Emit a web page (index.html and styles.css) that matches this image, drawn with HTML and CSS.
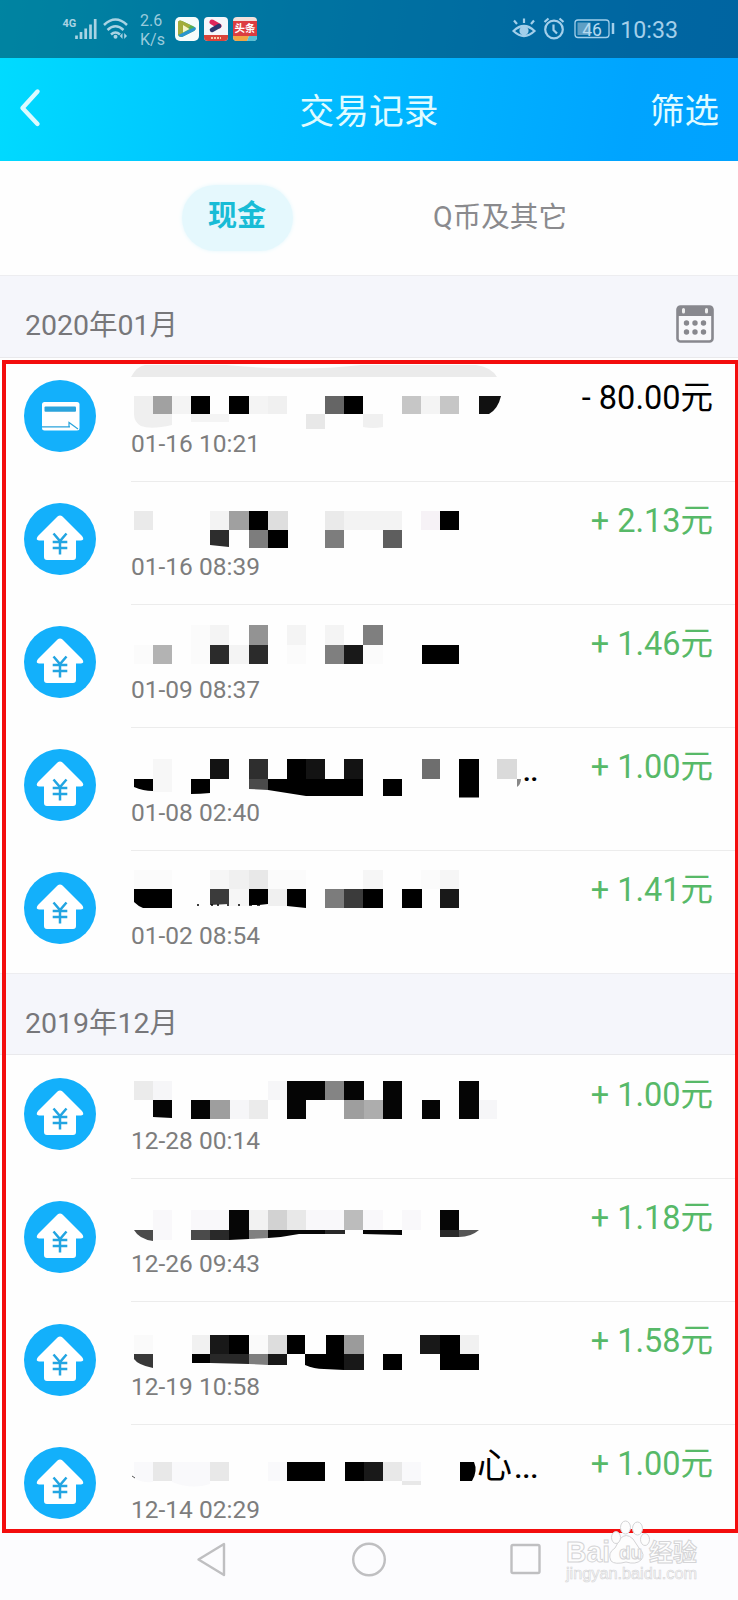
FILE: index.html
```
<!DOCTYPE html>
<html lang="zh-CN">
<head>
  <meta charset="UTF-8">
  <meta name="viewport" content="width=device-width, initial-scale=1.0">
  <title>交易记录</title>
  <link rel="stylesheet" href="styles.css">
</head>
<body>
  <!-- Общие иконки -->
  <svg class="defs" width="0" height="0">
    <symbol id="house" viewBox="0 0 72 72">
      <circle cx="36" cy="36" r="36" fill="#13b0fb"/>
      <path d="M33.5 13.6Q36 11.4 38.5 13.6L58 33Q61 37 57 37.5H52V54Q52 57 49 57H23Q20 57 20 54V37.5H15Q11 37 14 33Z" fill="#fff"/>
      <path d="M29.5 30.5L36 38L42.5 30.5M28.7 39H43.3M28.7 45H43.3M36 38V51.5" fill="none" stroke="#22a5e2" stroke-width="2.5"/>
    </symbol>
    <symbol id="card" viewBox="0 0 72 72">
      <circle cx="36" cy="36" r="36" fill="#13b0fb"/>
      <rect x="18" y="22" width="37.5" height="28.5" rx="2.5" fill="#fff"/>
      <rect x="20.5" y="26.5" width="31.5" height="5.2" rx="1" fill="#2ba4dc"/>
      <path d="M18 46.8H46M45 47V42.5L54 49" fill="none" stroke="#2ba4dc" stroke-width="1.2"/>
    </symbol>
  </svg>

  <div class="phone">
    <div class="top">
      <div class="status">
        <svg class="signal" width="66" height="26" viewBox="0 0 66 26" fill="none" stroke="#a9d3e3">
          <text x="0.5" y="10.5" class="net">4G</text>
          <path d="M14.500 23V19.5M19 23V16M23.700 23V12.5M28.500 23V8.5M33.200 23V3" stroke-width="2.7"/>
          <path d="M42 9Q53.500 -2 65 9M45.500 14Q53.500 6.5 61.500 14M49 18.5Q53.500 14.5 58 18.5" stroke-width="2.5"/>
          <circle cx="53.500" cy="20.7" r="2" fill="#a9d3e3" stroke="none"/>
          <path d="M60.5 17V23L57.8 20ZM62.2 17V23L65 20Z" fill="#a9d3e3" stroke="none"/>
        </svg>
        <div class="speed">2.6<br>K/s</div>
        <div class="apps">
          <svg width="24" height="24" viewBox="0 0 24 24">
            <rect width="24" height="24" rx="5" fill="#f6fcfb"/>
            <path d="M3 5Q4 2.5 7 4L19 9.5Q22 12 19 14L7 20Q3 20.500 3 17Z" fill="#53ad55"/>
            <path d="M3 5Q4 2.500 7 4L16 8.500L5 18L3 17Z" fill="#a2ad3c"/>
            <path d="M20 10Q22 12 19 14L7 20Q4 20 3.500 18Z" fill="#2995d1"/>
            <path d="M8 8L14.500 12L8 15.500Z" fill="#f4f5c9"/>
          </svg>
          <svg width="24" height="24" viewBox="0 0 24 24">
            <rect width="24" height="24" rx="4" fill="#f5f6fa"/>
            <path d="M0 18H24V20Q24 24 20 24H4Q0 24 0 20Z" fill="#db443b"/>
            <path d="M8 5L15 9" stroke="#e0255b" stroke-width="5" stroke-linecap="round"/>
            <path d="M15 9L8 13" stroke="#2c3770" stroke-width="4.500" stroke-linecap="round"/>
            <path d="M7 21H17" stroke="#f8c9a6" stroke-width="2" stroke-dasharray="2 1"/>
          </svg>
          <svg width="24" height="24" viewBox="0 0 24 24">
            <rect width="24" height="24" rx="4" fill="#f1e1dc"/>
            <rect y="4" width="24" height="15" fill="#dc3d40"/>
            <path d="M0 19H16L14 24H4Q0 24 0 20Z" fill="#f0a545"/>
            <path d="M16 19H24V20Q24 24 20 24H14Z" fill="#58bfd3"/>
            <text x="12" y="15" class="app-name">头条</text>
          </svg>
        </div>
        <div class="status-right">
          <svg width="106" height="24" viewBox="0 0 106 24" fill="none" stroke="#a3cfea" stroke-width="2.2">
            <path d="M1.500 14Q12 4 22.500 14Q12 24 1.500 14ZM12 6V1.500M5 7L2 3.500M19 7L22 3.500"/>
            <circle cx="12" cy="13.800" r="3.500" fill="#a3cfea"/>
            <circle cx="42" cy="12.500" r="8.800"/>
            <path d="M41.500 7.500V13L45 16.500M32.500 5L36.500 1.500M47.500 1.500L51.500 5"/>
            <rect x="63" y="3" width="34" height="17.500" rx="3" stroke-width="1.300"/>
            <rect x="65.500" y="5.500" width="13" height="12.500" fill="#5f9fc4" stroke="none"/>
            <path d="M101 6V17" stroke-width="2.500"/>
            <text x="80" y="18.500" class="battery">46</text>
          </svg>
          <span class="time">10:33</span>
        </div>
      </div>
      <div class="navbar">
        <svg width="22" height="40" viewBox="0 0 22 40"><path d="M18.500 3.500L3.500 20L18.500 36" fill="none" stroke="#dcfaff" stroke-width="4.400" stroke-linecap="round" stroke-linejoin="round"/></svg>
        <h1>交易记录</h1>
        <span>筛选</span>
      </div>
    </div>

    <div class="tabs">
      <div class="tab active"><span>现金</span></div>
      <div class="tab"><span>Q币及其它</span></div>
    </div>

    <div class="month">
      <span>2020年01月</span>
      <svg width="38" height="38" viewBox="0 0 38 38">
        <rect x="1.500" y="1.500" width="35" height="35" rx="3" fill="#f8f8fb" stroke="#88888e" stroke-width="2.600"/>
        <path d="M1 4Q1 1 4 1H34Q37 1 37 4V11H1Z" fill="#88888e"/>
        <path d="M7.500 4.500V7M30.500 4.500V7" stroke="#eee" stroke-width="3" stroke-linecap="round"/>
        <path d="M10.500 18H10.510M19 18H19.010M27.500 18H27.510M10.500 27H10.510M19 27H19.010M27.500 27H27.510" stroke="#88888e" stroke-width="5.400" stroke-linecap="round"/>
      </svg>
    </div>

    <div class="row">
      <svg class="icon"><use href="#card"/></svg>
      <div class="info">
        <svg class="mosaic" viewBox="0 0 420 72">
          <path d="M0 19Q6 8 14 7H95Q170 14 230 7H345Q360 9 366 19Z" fill="#ebebeb"/>
          <path d="M3 38H22V56H41V67Q20 72 10 68Q3 64 3 56Z" fill="#efefef"/>
          <path d="M22 38h19v18h-19z" fill="#a1a1a1"/>
          <path d="M41 38h19v18h-19zM118 38h19v18h-19zM60 56h38v8h-38zM290 38h19v18h-19z" fill="#f4f4f4"/>
          <path d="M60 38h19v18h-19zM98 38h20v18h-20zM213 38h19v18h-19z" fill="#000"/>
          <path d="M137 38h19v18h-19zM232 56h20v13q-10 2-20 0z" fill="#f0f0f0"/>
          <path d="M194 38h19v18h-19z" fill="#656565"/>
          <path d="M175 56h19v15h-19z" fill="#e8e8e8"/>
          <path d="M271 38h19v18h-19zM309 38h19v18h-19z" fill="#c6c6c6"/>
          <path d="M348 38h22q-3 13-12 18h-10z" fill="#111"/>
        </svg>
        <span class="date">01-16 10:21</span>
      </div>
      <span class="amount out">- 80.00元</span>
    </div>

    <div class="row">
      <svg class="icon"><use href="#house"/></svg>
      <div class="info">
        <svg class="mosaic" viewBox="0 0 420 72">
          <path d="M3 30h19v19h-19zM194 30h19v19h-19z" fill="#eaeaea"/>
          <path d="M79 30h19v19h-19zM213 30h39v19h-39zM252 30h19v19h-19z" fill="#f3f3f3"/>
          <path d="M290 30h19v19h-19z" fill="#f6f2f6"/>
          <path d="M98 30h20v19h-20z" fill="#a0a0a0"/>
          <path d="M118 30h19v19h-19zM137 49h20v18h-20zM309 30h19v19h-19z" fill="#000"/>
          <path d="M137 30h20v19h-20z" fill="#dedede"/>
          <path d="M79 49h19v17l-19-2z" fill="#2d2d2d"/>
          <path d="M118 49h19v18h-19zM194 49h19v18h-19z" fill="#7d7d7d"/>
          <path d="M252 49h19v18h-19z" fill="#5e5e5e"/>
        </svg>
        <span class="date">01-16 08:39</span>
      </div>
      <span class="amount">+ 2.13元</span>
    </div>

    <div class="row">
      <svg class="icon"><use href="#house"/></svg>
      <div class="info">
        <svg class="mosaic" viewBox="0 0 420 72">
          <path d="M79 21h19v20h-19zM156 21h19v20h-19zM194 21h19v20h-19zM98 41h20v19h-20z" fill="#f4f4f4"/>
          <path d="M3 41h19v19h-19zM60 21h19v39h-19zM156 41h19v19h-19zM232 41h20v19h-20z" fill="#fbfbfb"/>
          <path d="M118 21h19v20h-19z" fill="#939393"/>
          <path d="M232 21h20v20h-20zM194 41h19v19h-19z" fill="#7f7f7f"/>
          <path d="M22 41h19v19h-19z" fill="#b3b3b3"/>
          <path d="M79 41h19v19h-19zM118 41h19v19h-19z" fill="#2b2b2b"/>
          <path d="M213 41h19v19h-19z" fill="#191919"/>
          <path d="M291 41h37v19h-37z" fill="#000"/>
        </svg>
        <span class="date">01-09 08:37</span>
      </div>
      <span class="amount">+ 1.46元</span>
    </div>

    <div class="row">
      <svg class="icon"><use href="#house"/></svg>
      <div class="info">
        <svg class="mosaic" viewBox="0 0 420 72">
          <path d="M22 32h19v33h-19z" fill="#f7f7f7"/>
          <path d="M79 32h19v20h-19zM175 32h19v20h-19zM213 32h19v20h-19z" fill="#131313"/>
          <path d="M118 32h19v20h-19z" fill="#2e2e2e"/>
          <path d="M118 52h19v11l-19-1z" fill="#4a4a4a"/>
          <path d="M156 32h19v20h-19zM328 32h20v38.500h-20zM3 52h19v12q-10 0-19-4zM60 52h19v14q-10 1-19 1zM137 52h95v17h-57l-38-6zM252 52h19v17h-19z" fill="#000"/>
          <path d="M291 32h18v20h-18z" fill="#6e6e6e"/>
          <path d="M366 32h20v20h-20z" fill="#dadada"/>
          <path d="M386 52h4q0 5-4 8z" fill="#888"/>
          <text x="392" y="53.500" class="dots">..</text>
        </svg>
        <span class="date">01-08 02:40</span>
      </div>
      <span class="amount">+ 1.00元</span>
    </div>

    <div class="row last">
      <svg class="icon"><use href="#house"/></svg>
      <div class="info">
        <svg class="mosaic" viewBox="0 0 420 72">
          <path d="M79 20h19v19h-19zM232 20h20v19h-20zM309 20h19v19h-19zM98 39h20v17h-20z" fill="#f6f6f6"/>
          <path d="M3 20h38v19h-38zM137 20h38v19h-38zM290 20h19v19h-19z" fill="#fbfbfb"/>
          <path d="M98 20h20v19h-20zM137 39h19v17h-19z" fill="#f0f0f0"/>
          <path d="M118 20h19v19h-19z" fill="#e8e8e8"/>
          <path d="M3 39h38v19h-29q-5-2-9-6zM118 39h19v15l-9 1-10 0zM156 39h19v19l-19-2zM232 39h20v19h-20zM271 39h20v19h-20z" fill="#000"/>
          <path d="M79 39h19v15l-19 1zM213 39h19v19h-19z" fill="#3b3b3b"/>
          <path d="M194 39h19v19h-19z" fill="#7c7c7c"/>
          <path d="M309 39h19v19h-19z" fill="#191919"/>
          <path d="M66 55h2M80 55h2M86 55h2M96 55h2M107 55h2M118 55h3M126 55h3" stroke="#000" stroke-width="1.500"/>
        </svg>
        <span class="date">01-02 08:54</span>
      </div>
      <span class="amount">+ 1.41元</span>
    </div>

    <div class="month second"><span>2019年12月</span></div>

    <div class="row">
      <svg class="icon"><use href="#house"/></svg>
      <div class="info">
        <svg class="mosaic" viewBox="0 0 420 72">
          <path d="M3 26h19v19h-19zM118 45h19v19h-19z" fill="#ebebeb"/>
          <path d="M22 26h19v19h-19zM98 45h20v19h-20zM137 26h19v19h-19zM348 45h18v19h-18z" fill="#f6f6f8"/>
          <path d="M156 26h38v19h-19v19h-19zM213 26h20v19h-20zM252 26h19v38h-19zM328 26h20v38h-20zM22 45h19v18l-19-1zM60 45h19v19h-19zM291 45h18v19h-18z" fill="#050505"/>
          <path d="M194 26h19v19h-19z" fill="#848484"/>
          <path d="M79 45h20v19h-20zM213 45h20v19h-20z" fill="#9e9e9e"/>
          <path d="M233 45h19v19h-19z" fill="#adadad"/>
        </svg>
        <span class="date">12-28 00:14</span>
      </div>
      <span class="amount">+ 1.00元</span>
    </div>

    <div class="row">
      <svg class="icon"><use href="#house"/></svg>
      <div class="info">
        <svg class="mosaic" viewBox="0 0 420 72">
          <path d="M22 32h19v30h-19zM60 32h38v20h-38zM175 32h38v20h-38zM232 32h20v20h-20zM271 32h19v20h-19z" fill="#f9f8fa"/>
          <path d="M98 32h20v20h-20zM309 32h19v20h-19zM98 52h20v9l-20 1zM137 52h57v4h-26q-15 3-31 4zM232 52h39v5l-39-1z" fill="#060606"/>
          <path d="M118 32h19v20h-19z" fill="#f2f2f2"/>
          <path d="M137 32h19v20h-19z" fill="#d2d2d2"/>
          <path d="M156 32h19v20h-19z" fill="#e8e8e8"/>
          <path d="M213 32h19v20h-19z" fill="#bcbcbc"/>
          <path d="M3 52h19v11q-14-2-19-11zM60 52h19v10h-19z" fill="#4b4b4b"/>
          <path d="M79 52h19v10h-19zM194 52h20v4h-20zM309 52h19v7h-19z" fill="#292929"/>
          <path d="M118 52h19v8l-19 1z" fill="#808080"/>
          <path d="M328 52h20q-8 7-20 7z" fill="#555"/>
        </svg>
        <span class="date">12-26 09:43</span>
      </div>
      <span class="amount">+ 1.18元</span>
    </div>

    <div class="row">
      <svg class="icon"><use href="#house"/></svg>
      <div class="info">
        <svg class="mosaic" viewBox="0 0 420 72">
          <path d="M3 34h19v19h-19zM118 34h19v19h-19z" fill="#fafafa"/>
          <path d="M61 34h18v19h-18zM329 34h19v19h-19z" fill="#f1f1f1"/>
          <path d="M79 34h19v19h-19zM289 34h20v19h-20zM137 53h19v11h-19zM213 53h20v16h-20z" fill="#181818"/>
          <path d="M98 34h20v19h-20zM156 34h18v19h-18zM195 34h18v35l-20-1q-10 0-19-4v-11h21zM309 34h20v19h19v16h-39zM61 53h18v9h-18zM252 53h19v16h-19z" fill="#000"/>
          <path d="M137 34h19v19h-19z" fill="#ddd"/>
          <path d="M213 34h20v19h-20z" fill="#9b9b9b"/>
          <path d="M3 53h19v14q-15-3-19-9z" fill="#383838"/>
          <path d="M79 53h39v10l-39-1z" fill="#282828"/>
          <path d="M118 53h19v11l-19-1z" fill="#7e7e7e"/>
        </svg>
        <span class="date">12-19 10:58</span>
      </div>
      <span class="amount">+ 1.58元</span>
    </div>

    <div class="row cut">
      <svg class="icon"><use href="#house"/></svg>
      <div class="info">
        <svg class="mosaic" viewBox="0 0 420 72">
          <path d="M3 38h19v20q-12 1-19-4zM41 38h38v22q-18 6-38-2zM137 38h19v19h-19zM271 38h19v19h-19z" fill="#f9f9fb"/>
          <path d="M22 38h19v19h-19zM79 38h19v19h-19zM252 38h19v19h-19zM271 57h19v4h-19z" fill="#e8e8e8"/>
          <path d="M156 38h38v19h-38zM214 38h19v19h-19zM329 38h14q4 9-2 19h-12z" fill="#000"/>
          <path d="M233 38h19v19h-19z" fill="#191919"/>
          <path d="M1 52l3 2" stroke="#555"/>
          <text x="346" y="54" class="rest">心</text>
          <text x="383.500" y="54" class="dots wide">...</text>
        </svg>
        <span class="date">12-14 02:29</span>
      </div>
      <span class="amount">+ 1.00元</span>
    </div>

    <div class="bottom">
      <svg width="738" height="68" viewBox="0 0 738 68" fill="none" stroke="#bfbfc1" stroke-width="2.400">
        <path d="M224 12V43L198.500 27.500Z" stroke-linejoin="round"/>
        <circle cx="369" cy="27.500" r="15.800"/>
        <rect x="511.500" y="13" width="28" height="28" rx="1.500"/>
      </svg>
    </div>

    <div class="frame"></div>

    <svg class="watermark" width="140" height="66" viewBox="0 0 140 66">
      <text x="4" y="44.500" class="wm-big" textLength="44" lengthAdjust="spacingAndGlyphs">Bai</text>
      <path d="M49 44Q45 36 53 31L58 22Q64 15 71 22L77 31Q84 38 79 43Q74 48 64 45Q53 48 49 44Z"/>
      <ellipse cx="54" cy="20.500" rx="4.500" ry="6"/>
      <ellipse cx="63.500" cy="10.500" rx="5" ry="6.500"/>
      <ellipse cx="75.500" cy="11.500" rx="5" ry="6.500"/>
      <ellipse cx="83" cy="22.500" rx="4.500" ry="6"/>
      <text x="57" y="42" class="wm-du">du</text>
      <text x="87" y="44" class="wm-cn">经验</text>
      <text x="4" y="62" class="wm-url" textLength="131" lengthAdjust="spacingAndGlyphs">jingyan.baidu.com</text>
    </svg>
  </div>
</body>
</html>
```
FILE: styles.css
```
body {
  margin: 0;
  font-family: Roboto, "Noto Sans CJK SC", sans-serif;
  background: #fff;
}
.defs {
  position: absolute;
}
.phone {
  position: relative;
  width: 738px;
  height: 1600px;
  overflow: hidden;
  background: #fefefe;
}
/* Шапка */
.top {
  height: 161px;
  background: linear-gradient(100deg, #00dcff 0%, #00bfff 38%, #00a4ff 85%, #00a2ff 100%);
}
.status {
  display: flex;
  align-items: center;
  height: 58px;
  padding: 0 60px 0 62px;
  box-sizing: border-box;
  background: rgba(0, 28, 50, 0.46);
  color: #a9d3e3;
}
.net {
  font: bold 11px Roboto, sans-serif;
  fill: #a9d3e3;
  stroke: none;
}
.speed {
  width: 26px;
  margin: 2px 9px 0 12px;
  font-size: 16px;
  line-height: 19px;
  color: #9acbdc;
}
.apps {
  display: flex;
  gap: 5px;
}
.app-name {
  font: bold 10.500px "Noto Sans CJK SC", sans-serif;
  fill: #fff;
  text-anchor: middle;
}
.status-right {
  display: flex;
  align-items: center;
  gap: 2px;
  margin-left: auto;
}
.battery {
  font: 17.500px Roboto, sans-serif;
  fill: #b5daf0;
  stroke: none;
  text-anchor: middle;
}
.time {
  padding-top: 2px;
  font-size: 23.200px;
  color: #a3cfea;
}
.navbar {
  display: flex;
  align-items: center;
  justify-content: space-between;
  height: 103px;
  padding: 0 19px 0 19px;
  font-size: 34.500px;
  color: #e0fbff;
}
.navbar svg {
  margin-bottom: 3px;
}
.navbar span {
  margin-bottom: 4px;
}
.navbar h1 {
  margin: 0 0 1px 47px;
  font-size: 34.700px;
  font-weight: 400;
}
/* Вкладки */
.tabs {
  display: flex;
  height: 114px;
  padding: 0 106px;
  box-sizing: border-box;
}
.tab {
  flex: 1;
  display: flex;
  justify-content: center;
  align-items: flex-start;
  padding-top: 24px;
  font-size: 28.600px;
  line-height: 64px;
  color: #8a8a8d;
}
.tab span {
  height: 66px;
}
.tab.active {
  flex: 0 0 262px;
  font-size: 29px;
  font-weight: bold;
  line-height: 63px;
  color: #18bcd6;
}
.tab.active span {
  width: 111px;
  border-radius: 33px;
  background: #e5f8fd;
  box-shadow: 0 0 4px #e5f8fd;
  text-align: center;
}
.month {
  display: flex;
  align-items: center;
  justify-content: space-between;
  height: 83px;
  padding: 14px 24px 0 25px;
  box-sizing: border-box;
  border-top: 1px solid #ededf0;
  border-bottom: 1px solid #e9e9ec;
  background: #f5f6fb;
  font-size: 28.500px;
  color: #77777a;
}
.month span {
  margin-bottom: 2px;
}
.month.second {
  height: 82px;
}
/* Список операций */
.row {
  position: relative;
  display: flex;
  height: 123px;
  padding: 0 25px 0 24px;
}
.row .icon {
  width: 72px;
  height: 72px;
  margin: 22px 35px 0 0;
}
.month.second ~ .row .icon {
  margin-top: 23px;
}
.info {
  flex: 1;
  display: flex;
  flex-direction: column;
  margin: 0 -164px -1px 0;
  border-bottom: 1px solid #ececec;
}
.row.last .info {
  border-bottom: 0;
}
.row.cut {
  height: 108px;
}
.row.cut .info {
  border-bottom: 0;
}
.mosaic {
  width: 420px;
  height: 72px;
}
.date {
  font-size: 24.500px;
  line-height: 28px;
  color: #7d7d7d;
}
.amount {
  width: 139px;
  margin-top: 17px;
  display: flex;
  justify-content: flex-end;
  font-size: 32.500px;
  line-height: 46px;
  white-space: pre;
  color: #57b968;
}
.amount.out {
  color: #000;
}
.dots {
  font: bold 26px Roboto, sans-serif;
}
.dots.wide {
  letter-spacing: 0.500px;
}
.rest {
  font: 35px "Noto Sans CJK SC", sans-serif;
}
.bottom {
  height: 68px;
  background: #fcfcfe;
}
.bottom svg {
  display: block;
}
/* Красная рамка поверх списка */
.frame {
  position: absolute;
  left: 2px;
  top: 360px;
  width: 729px;
  height: 1165px;
  border: 4px solid #f30d0d;
}
.watermark {
  position: absolute;
  left: 562px;
  top: 1517px;
  fill: #fdfdfd;
  stroke: #d4d4d6;
  stroke-width: 1;
}
.wm-big {
  font: bold 29px "Liberation Sans", sans-serif;
}
.wm-du {
  font: bold 19px "Liberation Sans", sans-serif;
}
.wm-cn {
  font: bold 24px "Noto Sans CJK SC", sans-serif;
}
.wm-url {
  font: 16px "Liberation Sans", sans-serif;
  stroke-width: 0.600;
}
```
